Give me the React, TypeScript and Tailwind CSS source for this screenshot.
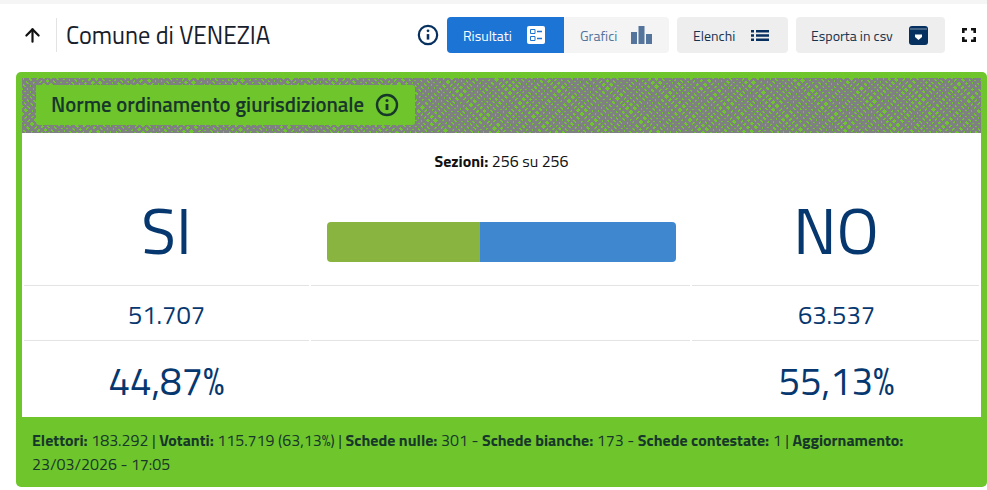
import { ArrowUp } from 'lucide-react';

const font = "font-['Titillium_Web','Roboto','Liberation_Sans',sans-serif]";

function InfoIcon({ size, color }: { size: number; color: string }) {
  return (
    <svg width={size} height={size} viewBox="0 0 24 24" fill="none" stroke={color} strokeWidth="2.4">
      <circle cx="12" cy="12" r="10" />
      <path d="M12 11v6" strokeWidth="2.8" />
      <circle cx="12" cy="7.4" r="1.5" fill={color} stroke="none" />
    </svg>
  );
}

function ListCardIcon() {
  return (
    <svg width="18" height="18" viewBox="0 0 18 18">
      <rect width="18" height="18" rx="2" fill="#fff" />
      <path d="M3.500 3.500h4.500v4h-4.500zM3.500 10.500h4.500v4h-4.500z" fill="none" stroke="#1c74d4" strokeWidth="1" />
      <path d="M10 5.500h5M10 12.500h5" stroke="#1c74d4" strokeWidth="1.500" />
    </svg>
  );
}

function BarsIcon() {
  return (
    <svg width="21" height="18" viewBox="0 0 21 18" fill="#54749b">
      <rect x="0" y="6" width="6" height="12" />
      <rect x="7.500" y="0" width="6" height="18" />
      <rect x="15" y="8" width="6" height="10" />
    </svg>
  );
}

function ListIcon() {
  return (
    <svg width="18" height="11" viewBox="0 0 18 11" fill="#06305f">
      <rect x="0" y="0" width="3" height="2.500" />
      <rect x="5" y="0" width="13" height="2.500" />
      <rect x="0" y="4.250" width="3" height="2.500" />
      <rect x="5" y="4.250" width="13" height="2.500" />
      <rect x="0" y="8.500" width="3" height="2.500" />
      <rect x="5" y="8.500" width="13" height="2.500" />
    </svg>
  );
}

function ArchiveIcon() {
  return (
    <svg width="19" height="19" viewBox="0 0 19 19">
      <path d="M3 0h13a3 3 0 0 1 3 3v13a3 3 0 0 1-3 3H3a3 3 0 0 1-3-3V3a3 3 0 0 1 3-3z" fill="#06305f" />
      <path d="M1 3h17" stroke="#fff" strokeWidth="0.500" />
      <path d="M6 8.500h7v2.500l-3.500 3-3.500-3z" fill="#fff" />
    </svg>
  );
}

function FullscreenIcon() {
  return (
    <svg width="14" height="14" viewBox="0 0 14 14" fill="none" stroke="#111" strokeWidth="2.600">
      <path d="M1.300 5V1.300H5M9 1.300h3.700V5M12.700 9v3.700H9M5 12.700H1.300V9" />
    </svg>
  );
}

// riga con tre celle separate, il bordo ha un piccolo stacco tra le colonne
function Row({ left, right, height, size }: { left: string; right: string; height: string; size: string }) {
  return (
    <div className={`mx-[2px] flex gap-[2px] text-[#06386f] ${height} ${size}`}>
      <div className="w-[285px] pt-[4px] border-t border-[#e3e3e3] flex items-center justify-center">{left}</div>
      <div className="flex-1 border-t border-[#e3e3e3]" />
      <div className="w-[287px] pl-[2px] pt-[4px] border-t border-[#e3e3e3] flex items-center justify-center">{right}</div>
    </div>
  );
}

export default function App() {
  return (
    <div className={`w-[987px] h-[490px] overflow-hidden bg-white ${font}`}>
      <div className="h-1 bg-[#f5f5f5]" />

      <div className="h-[68px] pb-[6px] flex items-center pl-[22px] pr-[10px]">
        <ArrowUp size={21} color="#111" strokeWidth={2.5} />
        <div className="w-px h-[34px] bg-[#e3e3e3] ml-[13px] mr-[9px]" />
        <h1 className="text-[24.3px] text-[#17202b]">Comune di VENEZIA</h1>
        <div className="ml-auto flex items-center">
          <InfoIcon size={22} color="#06305f" />
          <div className="ml-[8px] flex h-[36px] rounded overflow-hidden text-[14px]">
            <div className="w-[117px] bg-[#1c74d4] text-white flex items-center pl-[16px] gap-[15px]">
              Risultati <ListCardIcon />
            </div>
            <div className="w-[105px] bg-[#f4f4f5] text-[#54749b] flex items-center pl-[16px] gap-[14px]">
              Grafici <BarsIcon />
            </div>
          </div>
          <div className="ml-[8px] w-[111px] h-[36px] rounded bg-[#eeeeee] text-[14px] text-[#17324d] flex items-center pl-[16px] gap-[16px]">
            Elenchi <ListIcon />
          </div>
          <div className="ml-[8px] w-[149px] h-[36px] rounded bg-[#eeeeee] text-[14px] text-[#17324d] flex items-center pl-[15px] gap-[16px]">
            Esporta in csv <ArchiveIcon />
          </div>
          <div className="ml-[17px] mr-px">
            <FullscreenIcon />
          </div>
        </div>
      </div>

      <div className="ml-[16px] h-[415px] rounded-[5px] bg-[#6ec62c] flex flex-col overflow-hidden">
        <div className="mt-[6px] mx-[6px] h-[55px] p-[7px_14px] bg-[repeating-linear-gradient(45deg,#7f8082_0,#7f8082_2.5px,transparent_2.5px,transparent_4px,#7f8082_4px,#7f8082_6.5px,transparent_6.5px,transparent_9px,#7f8082_9px,#7f8082_11.5px,transparent_11.5px,transparent_15px,#7f8082_15px,#7f8082_17.5px,transparent_17.5px,transparent_20px,#7f8082_20px,#7f8082_22.5px,transparent_22.5px,transparent_24px,#7f8082_24px,#7f8082_26.5px,transparent_26.5px,transparent_28px,#7f8082_28px,#7f8082_30.5px,transparent_30.5px,transparent_32px,#7f8082_32px,#7f8082_34.5px,transparent_34.5px,transparent_36px),repeating-linear-gradient(-45deg,#7f8082_0,#7f8082_2.5px,transparent_2.5px,transparent_5px,#7f8082_5px,#7f8082_7.5px,transparent_7.5px,transparent_9px,#7f8082_9px,#7f8082_11.5px,transparent_11.5px,transparent_13px,#7f8082_13px,#7f8082_15.5px,transparent_15.5px,transparent_19px,#7f8082_19px,#7f8082_21.5px,transparent_21.5px,transparent_23px,#7f8082_23px,#7f8082_25.5px,transparent_25.5px,transparent_27px,#7f8082_27px,#7f8082_29.5px,transparent_29.5px,transparent_33px)]">
          <div className="w-fit h-[40px] pl-[15px] pr-[16px] gap-[11px] rounded-[3px] bg-[#6ec62c] flex items-center text-[20.8px] font-semibold text-[#17372a]">
            Norme ordinamento giurisdizionale
            <InfoIcon size={24} color="#17372a" />
          </div>
        </div>

        <div className="mx-[6px] h-[284px] bg-white">
          <p className="pt-[16px] h-[57px] text-center text-[16px] text-[#111]">
            <b className="font-bold">Sezioni:</b> 256 su 256
          </p>
          <div className="flex h-[95px] text-[#06386f]">
            <div className="w-[289px] pb-[16px] flex items-center justify-center text-[64px]">SI</div>
            <div className="flex-1 flex items-center justify-center">
              <div className="w-[349px] h-[40px] mt-[9px] rounded flex overflow-hidden">
                <div className="w-[153px] bg-[#8ab440]" />
                <div className="flex-1 bg-[#3f87ce]" />
              </div>
            </div>
            <div className="w-[290px] pb-[16px] flex items-center justify-center text-[64px]">NO</div>
          </div>
          <Row left="51.707" right="63.537" height="h-[55px]" size="text-[25.6px]" />
          <Row left="44,87%" right="55,13%" height="h-[77px]" size="text-[38.4px]" />
        </div>

        <div className="flex-1 px-[16px] pt-[11px] text-[16px] leading-[24px] text-[#17372a]">
          <b className="font-bold">Elettori:</b> 183.292 | <b className="font-bold">Votanti:</b> 115.719 (63,13%) |{' '}
          <b className="font-bold">Schede nulle:</b> 301 - <b className="font-bold">Schede bianche:</b> 173 -{' '}
          <b className="font-bold">Schede contestate:</b> 1 | <b className="font-bold">Aggiornamento:</b>
          <br />
          23/03/2026 - 17:05
        </div>
      </div>
    </div>
  );
}
